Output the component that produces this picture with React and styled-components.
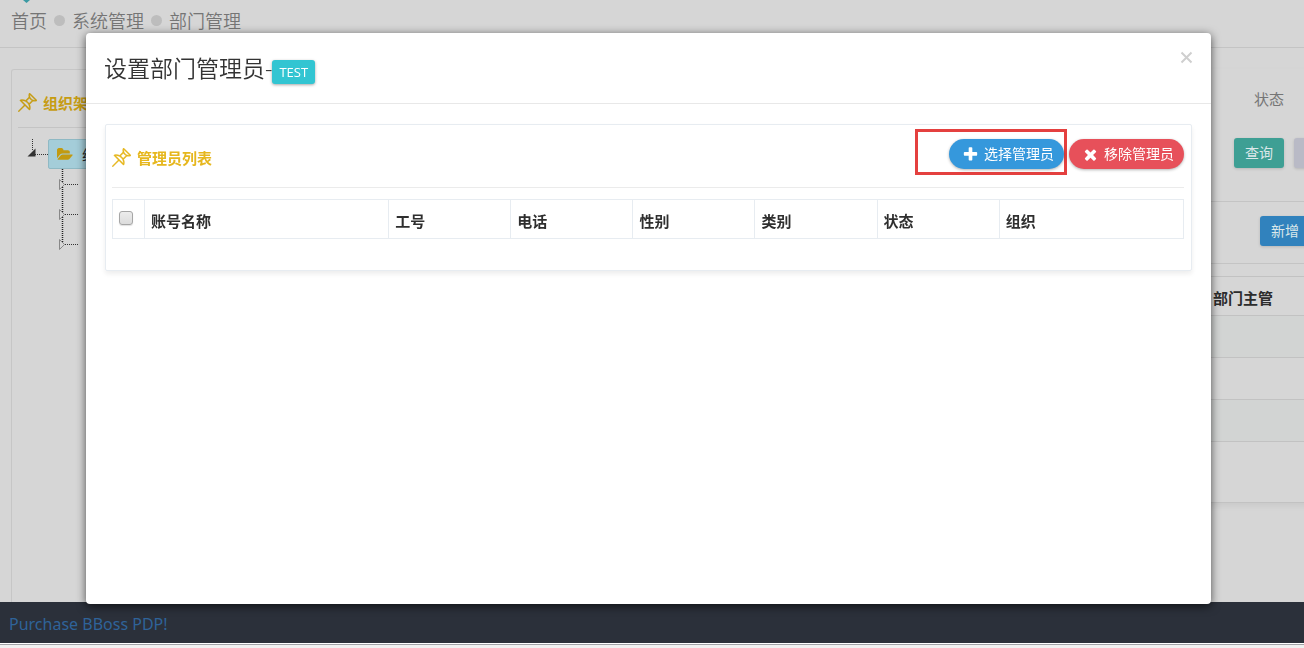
import React from "react";
import styled, { createGlobalStyle } from "styled-components";
import { SlPin } from "react-icons/sl";

const GlobalStyle = createGlobalStyle`
  *, *::before, *::after { box-sizing: border-box; }
  body {
    margin: 0;
    background: #d6d6d6;
    color: #333;
    font-family: "Open Sans", "Noto Sans CJK SC", sans-serif;
    font-size: 14px;
    line-height: 20px;
  }
  button { font-family: inherit; }
`;

const Page = styled.div`
  display: flex;
  flex-direction: column;
  min-height: 100vh;
  overflow: hidden;
`;

const Breadcrumb = styled.nav`
  display: flex;
  align-items: center;
  gap: 7px;
  height: 48px;
  padding: 0 11px 6px;
  border-bottom: 1px solid #c4c4c4;
  position: relative;
`;

const Crumb = styled.a`
  color: #757575;
  font-size: 18px;
  line-height: 24px;
  font-weight: 350;
  text-decoration: none;
`;

const Dot = styled.span`
  width: 11px;
  height: 11px;
  border-radius: 50%;
  background: #bdbdbd;
`;

const MenuPointer = styled.svg`
  position: absolute;
  top: 0;
  left: 22px;
`;

const Main = styled.main`
  display: flex;
  flex: 1;
  gap: 20px;
  padding-left: 11px;
`;

const TreePanel = styled.section`
  flex: 0 0 25%;
  margin-top: 21px;
  padding: 18px 6px 0;
  border: 1px solid #c6c6c6;
  border-bottom: 0;
  border-radius: 3px 3px 0 0;
`;

const PanelTitle = styled.h2`
  display: flex;
  align-items: center;
  gap: 6px;
  margin: 0;
  color: ${(p) => (p.$dim ? "#c69c12" : "#e6b71e")};
  font-size: 15px;
  line-height: 30px;
  font-weight: 700;
  white-space: nowrap;

  svg {
    margin-bottom: 2px;
    stroke: currentColor;
    stroke-width: 20px;
  }
`;

const TreeHead = styled.div`
  height: 40px;
  border-bottom: 1px solid #c4c4c4;
`;

const TreeRoot = styled.div`
  display: flex;
  margin-top: 11px;
  padding-left: 8px;
`;

const TreeNode = styled.button`
  display: flex;
  align-items: center;
  gap: 9px;
  height: 30px;
  padding: 0 8px;
  border: 1px solid #8fb9c4;
  border-radius: 2px;
  background: #a4cdd9;
  color: #222;
  font-size: 14px;
`;

const TreeList = styled.ul`
  margin: 0;
  padding: 0 0 0 40px;
  list-style: none;
`;

const TreeItem = styled.li`
  height: 30px;
`;

const ContentPanel = styled.section`
  flex: 1;
  align-self: flex-start;
  margin: 21px -40px 0 0;
  padding-bottom: 60px;
  border-bottom: 1px solid #c2c2c2;
  box-shadow: 0 3px 6px rgba(0, 0, 0, 0.06);
`;

const Filters = styled.div`
  display: flex;
  flex-direction: column;
  align-items: flex-end;
  gap: 24px;
  height: 133px;
  padding-top: 15px;
  border-bottom: 1px solid #c4c4c4;
`;

const FilterLabel = styled.span`
  padding-right: 60px;
  color: #757575;
  font-size: 15px;
  line-height: 30px;
`;

const ButtonRow = styled.div`
  display: flex;
  justify-content: flex-end;
  gap: 10px;
`;

const FlatButton = styled.button`
  width: ${(p) => (p.$wide ? "84px" : "50px")};
  height: 30px;
  padding: 0 11px;
  border: 0;
  border-radius: 3px;
  background: ${(p) => p.$color};
  color: #dce8ea;
  font-size: 14px;
  line-height: 30px;
  text-align: left;
  white-space: nowrap;
  box-shadow: 0 1px 3px rgba(0, 0, 0, 0.15);
`;

const Toolbar = styled(ButtonRow)`
  height: 62px;
  margin-bottom: 12px;
  padding-top: 14px;
  border-bottom: 1px solid #c4c4c4;
`;

const DeptTable = styled.table`
  width: 100%;
  border-collapse: collapse;
  table-layout: fixed;

  th {
    height: 39px;
    padding: 4px 6px 0;
    color: #2c2c2c;
    font-size: 15px;
    text-align: left;
  }
  th:last-child { width: 137px; }
  td { height: 42px; padding: 0; }
  tr { border-top: 1px solid #c2c2c2; }
  tbody tr:nth-child(odd) { background: #d2d4d3; }
  tbody { border-bottom: 1px solid #c2c2c2; }
`;

const Footer = styled.footer`
  padding: 9px 9px 6px;
  background: #2b303a;
`;

const Strip = styled.div`
  height: 5px;
  background: linear-gradient(#fff 1px, #a0a2a6 1px, #a0a2a6 2px, #f0f0f0 2px);
`;

const FooterLink = styled.a`
  display: block;
  color: #2f6399;
  font-family: "Noto Sans", sans-serif;
  font-size: 16px;
  line-height: 26px;
  text-decoration: none;
`;

const Dialog = styled.section`
  position: fixed;
  top: 33px;
  right: 93px;
  left: 86px;
  min-height: calc(100vh - 77px);
  border-radius: 4px;
  background: #fff;
  box-shadow: 0 2px 10px rgba(0, 0, 0, 0.65);
`;

const DialogHeader = styled.header`
  display: flex;
  align-items: center;
  justify-content: space-between;
  height: 71px;
  padding: 0 18px;
  border-bottom: 1px solid #e8e8e8;
`;

const DialogTitle = styled.h1`
  display: flex;
  align-items: center;
  margin: 0;
  color: #333;
  font-size: 23px;
  line-height: 32px;
  font-weight: 350;
`;

const Badge = styled.span`
  height: 24px;
  margin-top: 7px;
  padding: 0 7px;
  border-radius: 3px;
  background: #32c5d2;
  color: #fff;
  font-size: 13px;
  line-height: 24px;
  font-weight: 400;
  box-shadow: 0 1px 3px rgba(0, 0, 0, 0.35);
`;

const CloseButton = styled.button`
  display: flex;
  align-self: flex-start;
  margin-top: 18px;
  padding: 0;
  border: 0;
  background: none;
`;

const Card = styled.div`
  margin: 20px 19px 0;
  padding: 0 7px 31px 6px;
  border: 1px solid #e7ecf1;
  border-radius: 2px;
  box-shadow: 0 3px 5px rgba(0, 0, 0, 0.07);
`;

const CardHeader = styled.div`
  display: flex;
  align-items: flex-start;
  justify-content: space-between;
  height: 63px;
  padding-top: 4px;
  border-bottom: 1px solid #ebebeb;

  ${PanelTitle} { padding-top: 14px; }
`;

const Actions = styled.div`
  display: flex;
  align-items: baseline;
  gap: 2px;
`;

const Highlight = styled.div`
  padding: 7px 0 3px 31px;
  border: 3px solid #e4403f;
`;

const PillButton = styled.button`
  display: flex;
  align-items: center;
  justify-content: center;
  gap: 5px;
  width: 115px;
  height: 30px;
  padding: 0 0 0 3px;
  border: 0;
  border-radius: 15px;
  background: ${(p) => p.$color};
  color: #fff;
  font-size: 14px;
  line-height: 30px;
  white-space: nowrap;
  box-shadow: 0 1px 3px rgba(0, 0, 0, 0.3);
`;

const AdminTable = styled.table`
  width: 100%;
  margin-top: 11px;
  border-collapse: collapse;
  table-layout: fixed;

  th {
    height: 39px;
    padding: 4px 6px 0;
    border: 1px solid #e7ecf1;
    color: #2f2f2f;
    font-size: 15px;
    line-height: 20px;
    text-align: left;
  }
  th:first-child { padding: 0 6px 2px; }
`;

const Col = styled.col`
  width: ${(p) => p.$width};
`;

const CheckBox = styled.input`
  appearance: none;
  display: block;
  width: 14px;
  height: 14px;
  margin: 0;
  border: 1px solid #a6a6a6;
  border-radius: 3px;
  background: linear-gradient(#ececec, #dcdcdc);
  box-shadow: 0 1px 1px rgba(0, 0, 0, 0.12);
`;

const glyphs = {
  plus: "M1600 736v192q0 40-28 68t-68 28h-416v416q0 40-28 68t-68 28h-192q-40 0-68-28t-28-68v-416h-416q-40 0-68-28t-28-68v-192q0-40 28-68t68-28h416v-416q0-40 28-68t68-28h192q40 0 68 28t28 68v416h416q40 0 68 28t28 68z",
  times: "M1490 1322q0 40-28 68l-136 136q-28 28-68 28t-68-28l-294-294-294 294q-28 28-68 28t-68-28l-136-136q-28-28-28-68t28-68l294-294-294-294q-28-28-28-68t28-68l136-136q28-28 68-28t68 28l294 294 294-294q28-28 68-28t68 28l136 136q28 28 28 68t-28 68l-294 294 294 294q28 28 28 68z",
};

const Glyph = ({ name }) => (
  <svg width="17" height="17" viewBox="0 0 1792 1792" fill="currentColor" aria-hidden="true">
    <path d={glyphs[name]} />
  </svg>
);

const FolderOpen = () => (
  <svg width="16" height="15" viewBox="0 0 1920 1792" fill="#c29a10" aria-hidden="true">
    <path d="M1879 952q0 31-31 66l-336 396q-43 51-120.500 86.500t-143.500 35.500h-1088q-34 0-60.500-13t-26.500-43q0-31 31-66l336-396q43-51 120.500-86.500t143.500-35.500h1088q34 0 60.500 13t26.500 43zm-343-344v160h-832q-94 0-197 47.500t-164 119.500l-337 396-5 6q0-4-.5-12.500t-.5-12.500v-960q0-92 66-158t158-66h320q92 0 158 66t66 158v32h544q92 0 158 66t66 158z" />
  </svg>
);

const RootBranch = () => (
  <svg width="22" height="30" viewBox="0 0 22 30" aria-hidden="true">
    <path d="M6.500 0V11M9 15.500H22" stroke="#333" strokeDasharray="1 1" fill="none" />
    <path d="M9.500 9.500V17.500H1.500Z" fill="#333" />
  </svg>
);

const ChildBranch = ({ last }) => (
  <svg width="22" height="30" viewBox="0 0 22 30" aria-hidden="true">
    <path d={`M4.500 0V${last ? 16 : 30}`} stroke="#222" strokeWidth="1.5" strokeDasharray="1 1" fill="none" />
    <path d="M7 15.500H20" stroke="#333" strokeDasharray="1 1" fill="none" />
    <path d="M1.500 10.500L6.500 15.500L1.500 20.500Z" stroke="#888" fill="#d6d6d6" />
  </svg>
);

const columns = ["账号名称", "工号", "电话", "性别", "类别", "状态", "组织"];
const widths = ["32px", "22.8%", "11.4%", "11.4%", "11.4%", "11.4%", "11.4%", "auto"];

export default function App() {
  return (
    <>
      <GlobalStyle />
      <Page>
        <Breadcrumb>
          <MenuPointer width="10" height="3" viewBox="0 0 10 3" aria-hidden="true">
            <path d="M1 0H8L4.500 3Z" fill="#3b9aa3" />
          </MenuPointer>
          <Crumb href="#home">首页</Crumb>
          <Dot />
          <Crumb href="#system">系统管理</Crumb>
          <Dot />
          <Crumb href="#department">部门管理</Crumb>
        </Breadcrumb>

        <Main>
          <TreePanel>
            <TreeHead>
              <PanelTitle $dim>
                <SlPin size={19} />
                组织架构
              </PanelTitle>
            </TreeHead>
            <TreeRoot>
              <RootBranch />
              <TreeNode type="button">
                <FolderOpen />
                组织
              </TreeNode>
            </TreeRoot>
            <TreeList>
              <TreeItem><ChildBranch /></TreeItem>
              <TreeItem><ChildBranch /></TreeItem>
              <TreeItem><ChildBranch last /></TreeItem>
            </TreeList>
          </TreePanel>

          <ContentPanel>
            <Filters>
              <FilterLabel>状态</FilterLabel>
              <ButtonRow>
                <FlatButton type="button" $color="#3e9f94">查询</FlatButton>
                <FlatButton type="button" $color="#b9bac6" aria-label="重置" />
              </ButtonRow>
            </Filters>
            <Toolbar>
              <FlatButton type="button" $wide $color="#3182bd">新增</FlatButton>
            </Toolbar>
            <DeptTable>
              <thead>
                <tr><th /><th>部门主管</th></tr>
              </thead>
              <tbody>
                <tr><td /><td /></tr>
                <tr><td /><td /></tr>
                <tr><td /><td /></tr>
              </tbody>
            </DeptTable>
          </ContentPanel>
        </Main>

        <Footer>
          <FooterLink href="#purchase">Purchase BBoss PDP!</FooterLink>
        </Footer>
        <Strip />
      </Page>

      <Dialog role="dialog" aria-labelledby="dialog-title">
        <DialogHeader>
          <DialogTitle id="dialog-title">
            设置部门管理员-<Badge>TEST</Badge>
          </DialogTitle>
          <CloseButton type="button" aria-label="关闭">
            <svg width="13" height="13" viewBox="0 0 13 13" aria-hidden="true">
              <path d="M1.500 1.500L11.500 11.500M11.500 1.500L1.500 11.500" stroke="#cfcfcf" strokeWidth="2" />
            </svg>
          </CloseButton>
        </DialogHeader>
        <Card>
          <CardHeader>
            <PanelTitle>
              <SlPin size={19} />
              管理员列表
            </PanelTitle>
            <Actions>
              <Highlight>
                <PillButton type="button" $color="#3598dc">
                  <Glyph name="plus" />
                  选择管理员
                </PillButton>
              </Highlight>
              <PillButton type="button" $color="#e7505a">
                <Glyph name="times" />
                移除管理员
              </PillButton>
            </Actions>
          </CardHeader>
          <AdminTable>
            <colgroup>
              {widths.map((w, i) => <Col key={i} $width={w} />)}
            </colgroup>
            <thead>
              <tr>
                <th><CheckBox type="checkbox" aria-label="全选" /></th>
                {columns.map((c) => <th key={c}>{c}</th>)}
              </tr>
            </thead>
          </AdminTable>
        </Card>
      </Dialog>
    </>
  );
}
